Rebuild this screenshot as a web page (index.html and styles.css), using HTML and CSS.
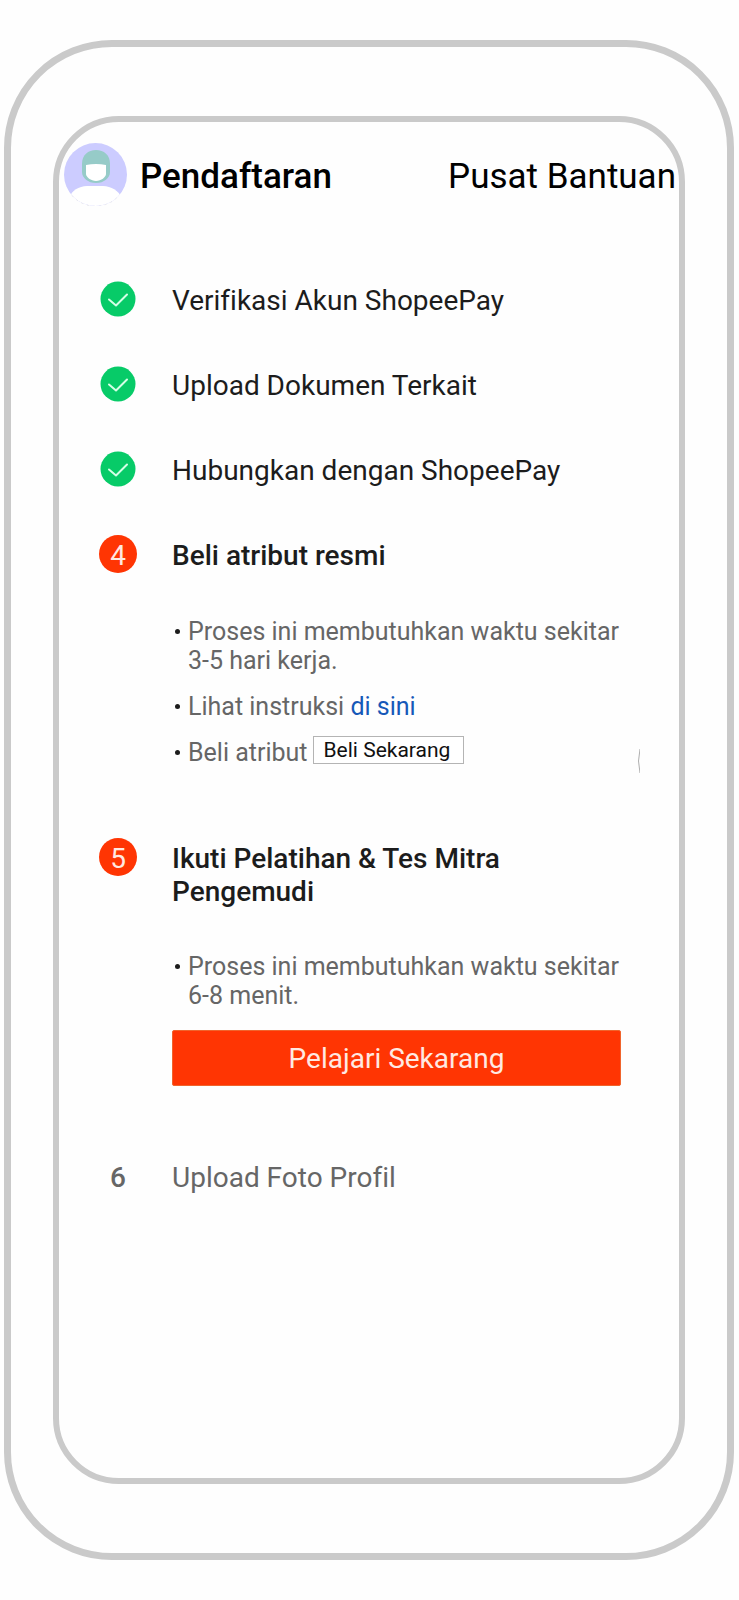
FILE: index.html
```html
<!DOCTYPE html>
<html lang="id">
<head>
<meta charset="utf-8">
<meta name="viewport" content="width=device-width, initial-scale=1">
<title>Pendaftaran</title>
<link rel="stylesheet" href="styles.css">
</head>
<body>
<div class="device">
  <main class="screen">
    <header class="header">
      <svg class="avatar" viewBox="0 0 63 63" aria-hidden="true">
        <defs><clipPath id="round"><circle cx="31.5" cy="31.5" r="31.5"/></clipPath></defs>
        <g clip-path="url(#round)">
          <rect width="63" height="63" fill="#ccccff"/>
          <path d="M18 21C18 12 24 7 32 7S46 12 46 21v8c0 6-6 11-14 11s-14-5-14-11z" fill="#96cbc8"/>
          <path d="M22 22q10-2 20 0v9c0 3-5 7-10 7s-10-4-10-7z" fill="#fff"/>
          <path d="M6 54c1-6 9-11 17-11h16c8 0 16 5 18 11l-1 10H6z" fill="#fff"/>
        </g>
        <path d="M8 52.500A31 31 0 0 0 55 52.500" fill="none" stroke="#dcdce4" stroke-width=".6" stroke-dasharray="2 4"/>
      </svg>
      <h1 class="title">Pendaftaran</h1>
      <a class="help" href="#bantuan">Pusat Bantuan</a>
    </header>

    <ol class="steps">
      <li class="step">
        <svg class="check" viewBox="0 0 38 38" aria-hidden="true"><circle cx="19" cy="19" r="17.500" fill="#07cb68"/><path d="M10 19.500l7 6L28 14.500" fill="none" stroke="#d5ffe6" stroke-width="2" stroke-linecap="round" stroke-linejoin="round"/></svg>
        <h2 class="name">Verifikasi Akun ShopeePay</h2>
      </li>
      <li class="step">
        <svg class="check" viewBox="0 0 38 38" aria-hidden="true"><circle cx="19" cy="19" r="17.500" fill="#07cb68"/><path d="M10 19.500l7 6L28 14.500" fill="none" stroke="#d5ffe6" stroke-width="2" stroke-linecap="round" stroke-linejoin="round"/></svg>
        <h2 class="name">Upload Dokumen Terkait</h2>
      </li>
      <li class="step">
        <svg class="check" viewBox="0 0 38 38" aria-hidden="true"><circle cx="19" cy="19" r="17.500" fill="#07cb68"/><path d="M10 19.500l7 6L28 14.500" fill="none" stroke="#d5ffe6" stroke-width="2" stroke-linecap="round" stroke-linejoin="round"/></svg>
        <h2 class="name">Hubungkan dengan ShopeePay</h2>
      </li>
      <li class="step active">
        <span class="number">4</span>
        <h2 class="name">Beli atribut resmi</h2>
        <div class="body">
          <ul class="notes">
            <li class="note"><p>Proses ini membutuhkan waktu sekitar 3-5 hari kerja.</p></li>
            <li class="note"><p>Lihat instruksi <a class="link" href="#instruksi">di sini</a></p></li>
            <li class="note"><p>Beli atribut</p><button class="buy" type="button">Beli Sekarang</button></li>
          </ul>
          <svg class="arc" viewBox="0 0 2 24" aria-hidden="true"><path d="M2 0Q-1 12 2 24" fill="none" stroke="#999" stroke-width=".8"/></svg>
        </div>
      </li>
      <li class="step active">
        <span class="number">5</span>
        <h2 class="name">Ikuti Pelatihan &amp; Tes Mitra Pengemudi</h2>
        <div class="body">
          <ul class="notes">
            <li class="note"><p>Proses ini membutuhkan waktu sekitar 6-8 menit.</p></li>
          </ul>
          <button class="learn" type="button">Pelajari Sekarang</button>
        </div>
      </li>
      <li class="step pending">
        <span class="number">6</span>
        <h2 class="name">Upload Foto Profil</h2>
      </li>
    </ol>
  </main>
</div>
</body>
</html>
```
FILE: styles.css
```css
* {
  box-sizing: border-box;
}

body {
  margin: 0;
  min-height: 100vh;
  padding: 40px 5px 40px 4px;
  display: flex;
  background: #fefefe;
  color: #1c1c1c;
  font-family: Roboto, "Liberation Sans", sans-serif;
  font-variant-ligatures: none;
}

h1, h2, p, ol, ul {
  margin: 0;
  padding: 0;
  list-style: none;
}

button {
  font-family: inherit;
  cursor: pointer;
}

.device {
  flex: 1;
  display: flex;
  padding: 69px 42px;
  border: 7px solid #cacaca;
  border-radius: 108px;
}

.screen {
  flex: 1;
  min-width: 0;
  border: 6px solid #cacaca;
  border-radius: 66px;
}

.header {
  display: flex;
  align-items: center;
  gap: 13px;
  padding: 21px 3px 0 5px;
  line-height: 40px;
  color: #000;
}

.avatar {
  width: 63px;
  height: 63px;
}

.title {
  padding-top: 4px;
  font-size: 35px;
  font-weight: 500;
}

.help {
  margin-left: auto;
  padding-top: 4px;
  font-size: 35px;
  color: inherit;
  text-decoration: none;
  white-space: nowrap;
}

.steps {
  display: flex;
  flex-direction: column;
  gap: 47px;
  padding: 74px 58px 40px 40px;
}

.step {
  display: grid;
  grid-template-columns: 38px 1fr;
  column-gap: 35px;
  align-items: start;
}

.check {
  width: 38px;
  height: 38px;
}

.number {
  display: flex;
  align-items: center;
  justify-content: center;
  height: 38px;
  padding-top: 2px;
  border-radius: 50%;
  font-size: 28px;
}

.name {
  padding-top: 4px;
  font-size: 28px;
  font-weight: 400;
  line-height: 33px;
}

.active .number {
  background: #ff3503;
  color: #ffe9e2;
}

.active .name {
  font-weight: 500;
}

.pending {
  color: #666;
}

.pending .number {
  font-weight: 500;
}

.body {
  position: relative;
  grid-column: 2;
  padding: 44px 0 24px;
}

.notes {
  display: flex;
  flex-direction: column;
  gap: 17px;
}

.note {
  display: flex;
  align-items: flex-start;
  font-size: 25px;
  line-height: 29px;
  color: #666;
}

.note::before {
  content: "";
  flex: none;
  width: 5px;
  height: 5px;
  margin: 12px 8px 0 3px;
  border-radius: 50%;
  background: #1c1c1c;
}

.link {
  color: #1658b8;
  text-decoration: none;
}

.buy {
  height: 28px;
  margin: -2px 0 0 5px;
  padding: 0 13px 0 10px;
  border: 1px solid #b4b4b4;
  background: #fff;
  color: #111;
  font-size: 21px;
  line-height: 26px;
}

.arc {
  position: absolute;
  right: -19px;
  bottom: 18px;
  width: 2px;
  height: 24px;
}

.learn {
  display: block;
  width: 100%;
  height: 56px;
  margin-top: 20px;
  padding: 0;
  border: 1px solid #f0642c;
  border-radius: 2px;
  background: #ff3503;
  color: #ffe9e2;
  font-size: 28px;
}
```
